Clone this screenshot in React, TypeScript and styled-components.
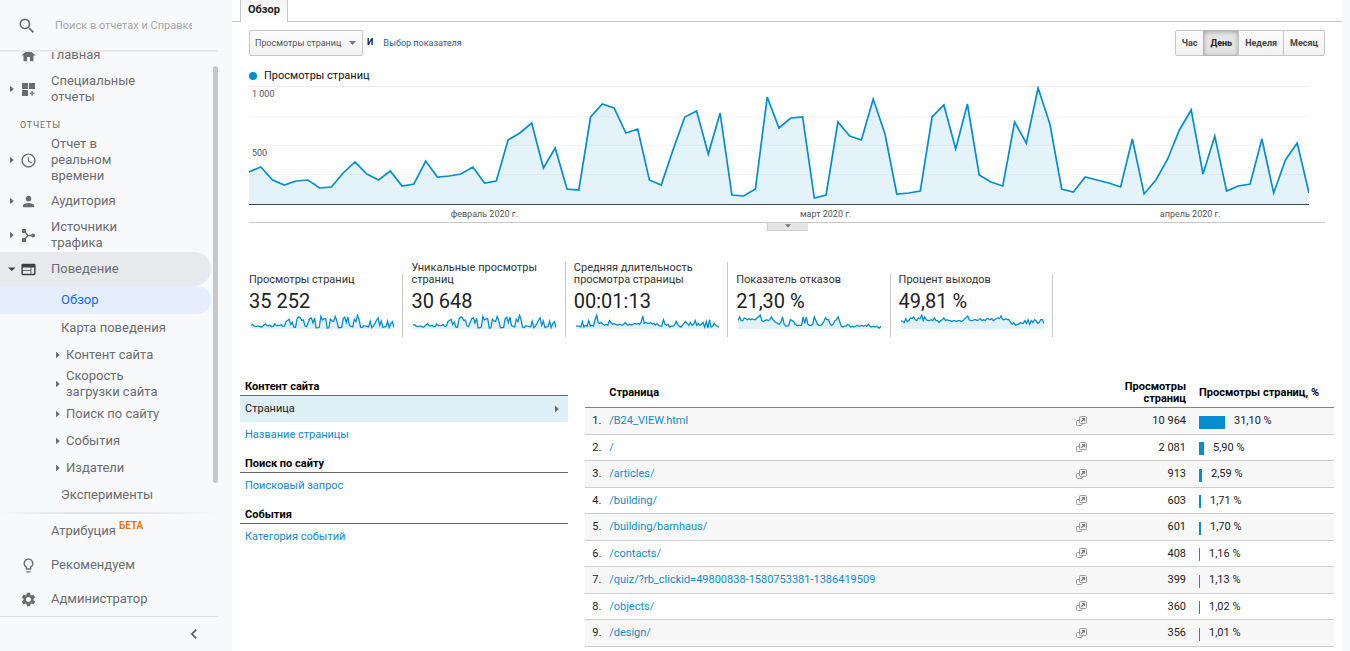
import React from "react";
import styled, { createGlobalStyle, css } from "styled-components";
import {
  MdAccessTime,
  MdChevronLeft,
  MdHome,
  MdLightbulbOutline,
  MdPerson,
  MdSearch,
  MdSettings,
  MdWeb,
} from "react-icons/md";

const GlobalStyle = createGlobalStyle`
  *, *::before, *::after { box-sizing: border-box; }
  body {
    margin: 0;
    background: #fff;
    color: #222;
    font-family: Roboto, "Liberation Sans", sans-serif;
    font-size: 11px;
    line-height: 12px;
  }
  button, input, select { font-family: inherit; }
  a { text-decoration: none; }
`;

const BLUE = "#058dc7";
const BAR_BLUE = "#058dcf";

/* ---------- shell ---------- */

const Shell = styled.div`
  display: grid;
  grid-template-columns: 232px minmax(0, 1fr) 8px;
  height: 100vh;
  overflow: hidden;
  background: #f8f9fb;
`;

const Main = styled.main`
  background: #fff;
  min-width: 0;
`;

/* ---------- sidebar ---------- */

const Sidebar = styled.aside`
  position: relative;
  display: flex;
  flex-direction: column;
  width: 218px;
  height: 100vh;
  color: #6b6c6e;
  font-size: 13px;
  line-height: 16px;
`;

const SearchBar = styled.label`
  display: flex;
  align-items: center;
  flex: none;
  height: 50px;
  padding: 2px 0 0 17px;
  gap: 18px;
  svg { flex: none; }
`;

const SearchInput = styled.input`
  width: 137px;
  height: 20px;
  padding: 0 0 2px;
  border: 0;
  outline: 0;
  background: none;
  font-size: 11px;
  &::placeholder { color: #a6a6a8; opacity: 1; }
`;

const Shade = styled.div<{ $fade?: boolean }>`
  flex: none;
  height: 2px;
  background: ${(p) =>
    p.$fade
      ? "linear-gradient(90deg, #f8f9fb, #e2e3e5 30%, #e2e3e5 60%, #f8f9fb)"
      : "linear-gradient(#e0e1e3, #eeeff1)"};
`;

const NavScroll = styled.nav`
  flex: 1;
  min-height: 0;
  display: flex;
  flex-direction: column;
  justify-content: flex-end;
  overflow: hidden;
  padding-bottom: 4px;
`;

const ScrollThumb = styled.div`
  position: absolute;
  top: 66px;
  right: 0;
  bottom: 168px;
  width: 5px;
  border-radius: 3px;
  background: #c6c7c9;
`;

const Item = styled.a<{ $open?: boolean }>`
  display: grid;
  grid-template-columns: 12px 17px 1fr;
  align-items: center;
  flex: none;
  column-gap: 2px;
  min-height: 34px;
  width: 211px;
  padding-left: 6px;
  color: inherit;
  ${(p) => p.$open && css`
    background: #e8e9ec;
    border-radius: 0 17px 17px 0;
    > svg { color: #3c4043; }
  `}
`;

const ItemText = styled.span`
  padding-left: 12px;
  white-space: nowrap;
`;

const SubItem = styled.a<{ $active?: boolean; $branch?: boolean }>`
  display: flex;
  align-items: center;
  flex: none;
  gap: 5px;
  min-height: 27px;
  width: 211px;
  padding-left: ${(p) => (p.$branch ? 55 : 61)}px;
  color: inherit;
  ${(p) => p.$active && css`
    min-height: 28px;
    background: #e6edfd;
    border-radius: 0 14px 14px 0;
    color: #0b6cf5;
  `}
`;

const GroupTitle = styled.div`
  flex: none;
  height: 30px;
  padding: 11px 0 0 20px;
  font-size: 9px;
  letter-spacing: 0.8px;
`;

const Beta = styled.sup`
  margin-left: 3px;
  color: #e8710a;
  font-size: 10px;
  font-weight: 600;
  line-height: 0;
  vertical-align: 6px;
`;

const CollapseRow = styled.div`
  flex: none;
  display: flex;
  justify-content: flex-end;
  align-items: center;
  height: 35px;
  padding-right: 14px;
  border-top: 1px solid #dfe0e3;
`;

const IconButton = styled.button`
  display: flex;
  padding: 0;
  border: 0;
  background: none;
  color: #5f6062;
`;

/* ---------- report header ---------- */

const Tabs = styled.div`
  display: flex;
  height: 22px;
  &::before { content: ""; width: 8px; border-bottom: 1px solid #c8c8c8; }
  &::after { content: ""; flex: 1; border-bottom: 1px solid #c8c8c8; }
`;

const Tab = styled.button`
  padding: 0 7px 3px;
  border: 1px solid #c8c8c8;
  border-width: 0 1px;
  background: linear-gradient(#f3f3f3, #fff);
  color: #222;
  font-size: 11px;
  font-weight: 700;
`;

const Overview = styled.section`
  padding: 8px 17px 0;
`;

const Toolbar = styled.div`
  display: flex;
  align-items: center;
  height: 26px;
  font-size: 9px;
`;

const SelectWrap = styled.label`
  position: relative;
  width: 114px;
  height: 26px;
  svg { position: absolute; right: 7px; top: 11px; pointer-events: none; }
`;

const MetricSelect = styled.select`
  appearance: none;
  width: 100%;
  height: 100%;
  padding: 0 5px;
  border: 1px solid #c6c6c6;
  border-radius: 2px;
  background: linear-gradient(#fcfcfc, #f1f1f1);
  color: #555;
  font-size: 9px;
`;

const And = styled.span`
  padding: 0 10px 3px 4px;
  font-weight: 700;
`;

const PickMetric = styled.a`
  color: #15649f;
`;

const Periods = styled.div`
  display: flex;
  height: 26px;
  margin-left: auto;
`;

const Period = styled.button<{ $on?: boolean }>`
  margin-left: -1px;
  padding: 0 6px;
  border: 1px solid #c6c6c6;
  background: linear-gradient(#fcfcfc, #f1f1f1);
  color: #444;
  font-size: 9px;
  font-weight: 700;
  &:first-child { border-radius: 2px 0 0 2px; }
  &:last-child { border-radius: 0 2px 2px 0; }
  ${(p) => p.$on && css`
    border-color: #b4b4b4;
    background: #e4e4e4;
    box-shadow: inset 0 1px 4px rgba(0, 0, 0, 0.3);
    color: #222;
  `}
`;

const Legend = styled.div`
  display: flex;
  align-items: center;
  gap: 7px;
  height: 14px;
  margin-top: 13px;
  color: #111;
  &::before {
    content: "";
    width: 8px;
    height: 8px;
    border-radius: 50%;
    background: ${BAR_BLUE};
  }
`;

const ChartBox = styled.div`
  height: 140px;
  padding: 3px 16px 0 0;
  border-bottom: 1px solid #c8c8c8;
  svg { display: block; }
`;

const ChartText = styled.text`
  fill: #555;
  font-size: 9px;
`;

const Handle = styled.button`
  display: flex;
  justify-content: center;
  width: 41px;
  height: 8px;
  margin: 0 auto;
  padding: 1px 0 0;
  border: 0;
  border-left: 1px solid #ccc;
  border-bottom: 1px solid #ccc;
  background: #e6e6e6;
`;

/* ---------- metrics ---------- */

const Metrics = styled.div`
  display: grid;
  grid-template-columns: repeat(5, 1fr);
  align-items: end;
  column-gap: 8px;
  max-width: 804px;
  height: 106px;
`;

const Metric = styled.div`
  padding: 0 8px 8px 0;
  border-right: 1px solid #c8c8c8;
  color: #333;
  svg { display: block; margin: 1px 0 0 2px; }
`;

const MetricName = styled.div`
  min-height: 12px;
`;

const MetricValue = styled.div`
  color: #222;
  font-size: 20px;
  line-height: 24px;
  padding-top: 3px;
`;

/* ---------- lower panels ---------- */

const Panels = styled.div`
  display: grid;
  grid-template-columns: 30% minmax(0, 1fr);
  column-gap: 17px;
  padding: 40px 8px 0;
`;

const GroupHead = styled.h3`
  height: 25px;
  margin: 0;
  padding: 9px 5px 0;
  border-bottom: 1px solid #666;
  color: #000;
  font-size: 11px;
  font-weight: 700;
  line-height: 14px;
  &:first-child { height: 19px; padding-top: 3px; }
`;

const Dimension = styled.a<{ $on?: boolean }>`
  display: flex;
  align-items: center;
  justify-content: space-between;
  height: 26px;
  padding: 0 8px 0 5px;
  color: ${(p) => (p.$on ? "#222" : "#128bcc")};
  background: ${(p) => (p.$on ? "#ddeff7" : "none")};
  svg { color: #666; }
`;

const Table = styled.table`
  width: 100%;
  table-layout: fixed;
  border-collapse: separate;
  border-spacing: 0;
  color: #222;
  th, td { padding: 0; text-align: left; }
  th {
    height: 31px;
    padding-top: 2px;
    border-bottom: 1px solid #808080;
    color: #000;
    font-weight: 700;
  }
  td { height: 26px; border-bottom: 1px solid #ccc; }
  tbody tr:nth-child(odd) td { height: 27px; background: #f7f7f7; }
  th.num, td.num { text-align: right; }
  td:first-child { padding-left: 7px; }
  a { color: #128bcc; }
`;

const BarCell = styled.div`
  display: flex;
  align-items: center;
  padding-left: 13px;
`;

const Bar = styled.span`
  height: 13px;
  margin: 2px 9px 0 0;
  background: ${BAR_BLUE};
`;

/* ---------- data ---------- */

const views = [
  172, 167, 180, 185, 181, 180, 188, 187, 173, 162, 174, 180, 171, 186, 184,
  161, 177, 176, 174, 167, 183, 181, 140, 133, 123, 168, 148, 189, 190, 117,
  104, 108, 133, 129, 180, 185, 150, 117, 111, 154, 113, 195, 196, 189, 97,
  128, 118, 117, 198, 195, 122, 136, 140, 99, 134, 194, 193, 191, 117, 105,
  149, 104, 175, 182, 186, 122, 143, 88, 124, 189, 192, 177, 180, 183, 187,
  139, 194, 180, 159, 130, 110, 174, 136, 191, 186, 184, 139, 193, 160, 143,
  193,
].map((y) => 205 - y);

const duration = [
  3, 3, 3, 2, 8, 2, 4, 3, 9, 3, 4, 3, 10, 15, 7, 6, 7, 5, 4, 5, 4, 9, 7, 5,
  6, 5, 4, 5, 5, 4, 5, 7, 5, 4, 5, 4, 5, 6, 5, 6, 5, 7, 14, 6, 7, 6, 6, 7,
  5, 6, 4, 6, 4, 3, 3, 10, 5, 4, 5, 2, 3, 3, 4, 8, 5, 3, 2, 4, 6, 8, 6, 4,
  7, 4, 5, 9, 4, 6, 4, 5, 7, 2, 8, 1, 10, 2, 3, 6, 4, 3, 2,
];

const bounce = [
  9, 13, 9, 9, 12, 11, 10, 11, 10, 11, 10, 10, 12, 13, 15, 9, 8, 9, 10, 9, 10,
  13, 10, 8, 7, 6, 5, 7, 13, 5, 3, 3, 4, 10, 9, 8, 5, 4, 4, 4, 4, 13, 6, 13,
  5, 4, 4, 5, 13, 9, 5, 4, 4, 5, 8, 12, 10, 10, 5, 4, 5, 9, 10, 13, 8, 3, 2,
  3, 3, 5, 4, 2, 3, 2, 3, 4, 3, 3, 4, 3, 4, 3, 5, 3, 2, 3, 2, 3, 2, 1, 3,
];

const exits = [
  9, 8, 7, 11, 8, 9, 12, 11, 13, 10, 9, 12, 11, 15, 9, 13, 10, 9, 9, 10, 9,
  12, 9, 9, 7, 9, 10, 12, 9, 10, 9, 9, 8, 9, 9, 8, 9, 9, 8, 9, 11, 12, 14, 10,
  9, 9, 10, 10, 9, 10, 11, 9, 10, 9, 11, 11, 10, 11, 9, 10, 11, 12, 11, 14,
  10, 10, 11, 10, 10, 7, 5, 7, 4, 5, 5, 7, 6, 6, 9, 6, 10, 5, 9, 7, 10, 9, 6,
  7, 10, 10, 6,
];

const metrics = [
  { name: "Просмотры страниц", value: "35 252", data: views, max: 119 },
  { name: "Уникальные просмотры страниц", value: "30 648", data: views, max: 119 },
  { name: "Средняя длительность просмотра страницы", value: "00:01:13", data: duration, max: 15 },
  { name: "Показатель отказов", value: "21,30 %", data: bounce, max: 15 },
  { name: "Процент выходов", value: "49,81 %", data: exits, max: 15 },
];

const pages = [
  { url: "/B24_VIEW.html", views: "10 964", share: 31.1, label: "31,10 %" },
  { url: "/", views: "2 081", share: 5.9, label: "5,90 %" },
  { url: "/articles/", views: "913", share: 2.59, label: "2,59 %" },
  { url: "/building/", views: "603", share: 1.71, label: "1,71 %" },
  { url: "/building/barnhaus/", views: "601", share: 1.7, label: "1,70 %" },
  { url: "/contacts/", views: "408", share: 1.16, label: "1,16 %" },
  { url: "/quiz/?rb_clickid=49800838-1580753381-1386419509", views: "399", share: 1.13, label: "1,13 %" },
  { url: "/objects/", views: "360", share: 1.02, label: "1,02 %" },
  { url: "/design/", views: "356", share: 1.01, label: "1,01 %" },
];

/* ---------- drawings ---------- */

const Caret = ({ open }: { open?: boolean }) => (
  <svg width="12" height="8" viewBox="0 0 12 8" fill="currentColor">
    {open ? <path d="M2 2.500h7.500L5.800 6z" /> : <path d="M4 .8v6.400L7.800 4z" />}
  </svg>
);

const SubCaret = () => (
  <svg width="6" height="8" viewBox="0 0 6 8" fill="currentColor">
    <path d="M1 .8v6.400L4.800 4z" />
  </svg>
);

const DownCaret = ({ width = 7 }: { width?: number }) => (
  <svg width={width} height="4" viewBox="0 0 7 4" fill="#777">
    <path d="M0 0h7L3.500 4z" />
  </svg>
);

const CustomReportsIcon = () => (
  <svg width="17" height="17" viewBox="0 0 17 17" fill="currentColor">
    <path d="M2 2h6v6H2zM9 2h6v6H9zM2 9h6v6H2zM11.500 10h1.200v1.800h1.800v1.200h-1.800v1.800h-1.200V13H9.700v-1.200h1.800z" />
  </svg>
);

const SourcesIcon = () => (
  <svg width="17" height="17" viewBox="0 0 17 17" fill="currentColor">
    <path d="M4 4l4 4.500L4 13M8 8.500h5" fill="none" stroke="currentColor" strokeWidth="1.500" />
    <path d="M2 2h4v4H2zM2 11h4v4H2z" />
    <circle cx="13" cy="8.500" r="2" />
  </svg>
);

const OpenIcon = () => (
  <svg width="11" height="11" viewBox="0 0 11 11" fill="none" stroke="#9a9a9a">
    <path d="M3 4.500H1.500a1 1 0 0 0-1 1V8.500a1 1 0 0 0 1 1H5a1 1 0 0 0 1-1V8" />
    <rect x="3.500" y="0.500" width="7" height="7" rx="1" fill="#f1f1f1" />
    <path d="M5.200 5.800L7.500 3.500" stroke="#777" strokeWidth="1.200" />
    <path d="M5.500 2h3.500v3.500z" fill="#777" stroke="none" />
  </svg>
);

function areaPaths(data: number[], width: number, height: number, max: number) {
  const pts = data.map(
    (v, i) =>
      `${((i * width) / (data.length - 1)).toFixed(1)},${(height - (v / max) * height).toFixed(1)}`
  );
  const line = `M${pts.join("L")}`;
  return { line, area: `${line}L${width},${height}L0,${height}Z` };
}

function MainChart() {
  const { line, area } = areaPaths(views, 1060, 119, 119);
  return (
    <ChartBox>
      <svg width="100%" height="136" role="img" aria-label="Просмотры страниц по дням">
        <svg width="100%" height="119" viewBox="0 0 1060 119" preserveAspectRatio="none">
          <path d="M0 .5H1060" stroke="#ececec" />
          <path d="M0 30.500H1060M0 59.500H1060M0 88.500H1060" stroke="#f5f5f5" />
          <path d={area} fill={BLUE} fillOpacity="0.11" />
          <path d={line} fill="none" stroke={BAR_BLUE} strokeWidth="1.700" />
          <path d="M0 118.500H1060" stroke="#3c434a" />
        </svg>
        <ChartText x="3" y="11">1 000</ChartText>
        <ChartText x="3" y="70">500</ChartText>
        <ChartText x="22.2%" y="131" textAnchor="middle">февраль 2020 г.</ChartText>
        <ChartText x="54.4%" y="131" textAnchor="middle">март 2020 г.</ChartText>
        <ChartText x="88.8%" y="131" textAnchor="middle">апрель 2020 г.</ChartText>
      </svg>
    </ChartBox>
  );
}

function Sparkline({ data, max }: { data: number[]; max: number }) {
  const { line, area } = areaPaths(data, 143, 14, max);
  return (
    <svg width="143" height="15" viewBox="0 -1 143 15">
      <path d={area} fill={BLUE} fillOpacity="0.12" />
      <path d={line} fill="none" stroke={BAR_BLUE} strokeWidth="1.300" />
    </svg>
  );
}

/* ---------- page ---------- */

function SideMenu() {
  return (
    <Sidebar>
      <SearchBar>
        <MdSearch size={20} />
        <SearchInput placeholder="Поиск в отчетах и Справке" aria-label="Поиск в отчетах и Справке" />
      </SearchBar>
      <Shade />
      <NavScroll>
        <Item href="#home"><span /><MdHome size={17} /><ItemText>Главная</ItemText></Item>
        <Item href="#custom"><Caret /><CustomReportsIcon /><ItemText>Специальные<br />отчеты</ItemText></Item>
        <GroupTitle>ОТЧЕТЫ</GroupTitle>
        <Item href="#realtime"><Caret /><MdAccessTime size={17} /><ItemText>Отчет в<br />реальном<br />времени</ItemText></Item>
        <Item href="#audience"><Caret /><MdPerson size={17} /><ItemText>Аудитория</ItemText></Item>
        <Item href="#sources"><Caret /><SourcesIcon /><ItemText>Источники<br />трафика</ItemText></Item>
        <Item href="#behavior" $open><Caret open /><MdWeb size={17} /><ItemText>Поведение</ItemText></Item>
        <SubItem href="#overview" $active>Обзор</SubItem>
        <SubItem href="#flow">Карта поведения</SubItem>
        <SubItem href="#content" $branch><SubCaret />Контент сайта</SubItem>
        <SubItem href="#speed" $branch><SubCaret /><span>Скорость<br />загрузки сайта</span></SubItem>
        <SubItem href="#search" $branch><SubCaret />Поиск по сайту</SubItem>
        <SubItem href="#events" $branch><SubCaret />События</SubItem>
        <SubItem href="#publishers" $branch><SubCaret />Издатели</SubItem>
        <SubItem href="#experiments">Эксперименты</SubItem>
      </NavScroll>
      <Shade $fade />
      <Item href="#attribution"><span /><span /><ItemText>Атрибуция<Beta>БЕТА</Beta></ItemText></Item>
      <Item href="#discover"><span /><MdLightbulbOutline size={17} /><ItemText>Рекомендуем</ItemText></Item>
      <Item href="#admin"><span /><MdSettings size={17} /><ItemText>Администратор</ItemText></Item>
      <CollapseRow>
        <IconButton aria-label="Свернуть меню"><MdChevronLeft size={20} /></IconButton>
      </CollapseRow>
      <ScrollThumb />
    </Sidebar>
  );
}

function PagesTable() {
  return (
    <Table>
      <colgroup>
        <col style={{ width: 24 }} />
        <col />
        <col style={{ width: 30 }} />
        <col style={{ width: 80 }} />
        <col style={{ width: 148 }} />
      </colgroup>
      <thead>
        <tr>
          <th />
          <th>Страница</th>
          <th />
          <th className="num">Просмотры страниц</th>
          <th><BarCell>Просмотры страниц, %</BarCell></th>
        </tr>
      </thead>
      <tbody>
        {pages.map((p, i) => (
          <tr key={p.url}>
            <td>{i + 1}.</td>
            <td><a href={p.url}>{p.url}</a></td>
            <td><IconButton aria-label={`Открыть ${p.url}`}><OpenIcon /></IconButton></td>
            <td className="num">{p.views}</td>
            <td>
              <BarCell>
                <Bar style={{ width: p.share < 1.5 ? 1 : Math.ceil(p.share * 0.83) }} />
                {p.label}
              </BarCell>
            </td>
          </tr>
        ))}
      </tbody>
    </Table>
  );
}

export default function App() {
  return (
    <>
      <GlobalStyle />
      <Shell>
        <SideMenu />
        <Main>
          <Tabs><Tab>Обзор</Tab></Tabs>
          <Overview>
            <Toolbar>
              <SelectWrap>
                <MetricSelect aria-label="Показатель">
                  <option>Просмотры страниц</option>
                </MetricSelect>
                <DownCaret />
              </SelectWrap>
              <And>И</And>
              <PickMetric href="#metric">Выбор показателя</PickMetric>
              <Periods>
                <Period>Час</Period>
                <Period $on>День</Period>
                <Period>Неделя</Period>
                <Period>Месяц</Period>
              </Periods>
            </Toolbar>
            <Legend>Просмотры страниц</Legend>
            <MainChart />
            <Handle aria-label="Развернуть"><DownCaret width={6} /></Handle>
            <Metrics>
              {metrics.map((m) => (
                <Metric key={m.name}>
                  <MetricName>{m.name}</MetricName>
                  <MetricValue>{m.value}</MetricValue>
                  <Sparkline data={m.data} max={m.max} />
                </Metric>
              ))}
            </Metrics>
          </Overview>
          <Panels>
            <div>
              <GroupHead>Контент сайта</GroupHead>
              <Dimension href="#page" $on>Страница <SubCaret /></Dimension>
              <Dimension href="#title">Название страницы</Dimension>
              <GroupHead>Поиск по сайту</GroupHead>
              <Dimension href="#query">Поисковый запрос</Dimension>
              <GroupHead>События</GroupHead>
              <Dimension href="#category">Категория событий</Dimension>
            </div>
            <PagesTable />
          </Panels>
        </Main>
      </Shell>
    </>
  );
}
